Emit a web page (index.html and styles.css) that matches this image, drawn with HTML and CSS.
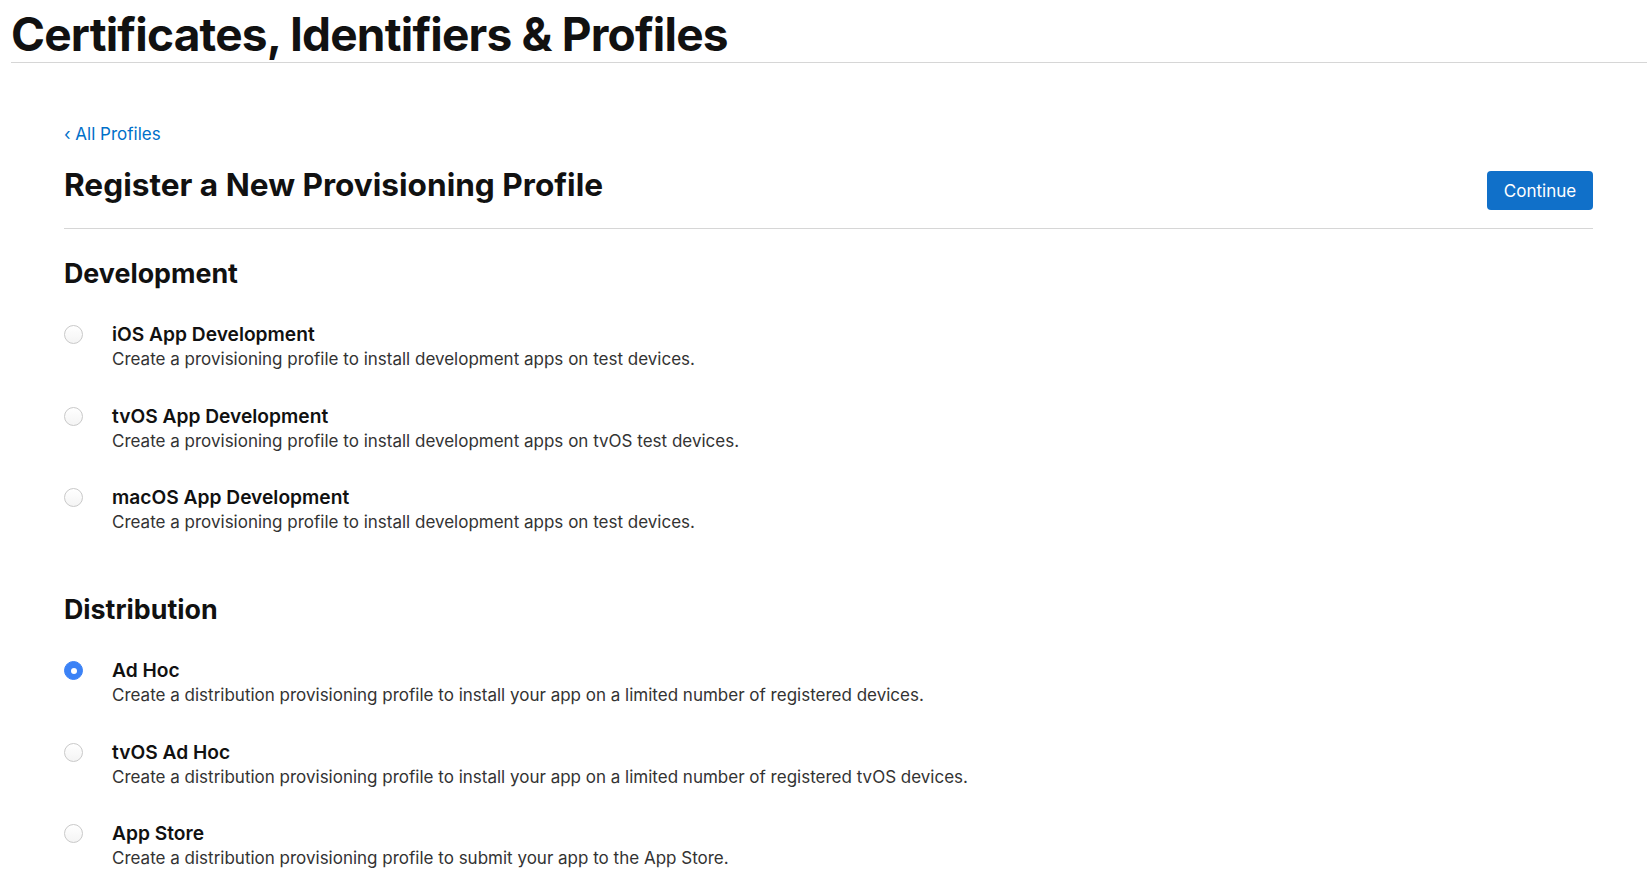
FILE: index.html
```html
<!DOCTYPE html>
<html>
  <head>
    <title>Certificates, Identifiers &amp; Profiles</title>
    <meta name="viewport" content="width=device-width, initial-scale=1.0" />
    <link rel="stylesheet" href="styles.css">
  </head>
  <body>
    <div class="page-header">
      <h1>Certificates, Identifiers &amp; Profiles</h1>
    </div>

    <div class="content">
      <a href="#" class="back-link">&lsaquo; All Profiles</a>

      <div class="title-row">
        <h2>Register a New Provisioning Profile</h2>
        <button class="button">Continue</button>
      </div>

      <!-- Development -->
      <div class="section">
        <h3>Development</h3>
        <div class="option-list">
          <label class="option">
            <span class="radio"></span>
            <span class="option-text">
              <span class="option-title">iOS App Development</span>
              <span class="option-desc">Create a provisioning profile to install development apps on test devices.</span>
            </span>
          </label>
          <label class="option">
            <span class="radio"></span>
            <span class="option-text">
              <span class="option-title">tvOS App Development</span>
              <span class="option-desc">Create a provisioning profile to install development apps on tvOS test devices.</span>
            </span>
          </label>
          <label class="option">
            <span class="radio"></span>
            <span class="option-text">
              <span class="option-title">macOS App Development</span>
              <span class="option-desc">Create a provisioning profile to install development apps on test devices.</span>
            </span>
          </label>
        </div>
      </div>

      <!-- Distribution -->
      <div class="section">
        <h3>Distribution</h3>
        <div class="option-list">
          <label class="option">
            <span class="radio checked"></span>
            <span class="option-text">
              <span class="option-title">Ad Hoc</span>
              <span class="option-desc">Create a distribution provisioning profile to install your app on a limited number of registered devices.</span>
            </span>
          </label>
          <label class="option">
            <span class="radio"></span>
            <span class="option-text">
              <span class="option-title">tvOS Ad Hoc</span>
              <span class="option-desc">Create a distribution provisioning profile to install your app on a limited number of registered tvOS devices.</span>
            </span>
          </label>
          <label class="option">
            <span class="radio"></span>
            <span class="option-text">
              <span class="option-title">App Store</span>
              <span class="option-desc">Create a distribution provisioning profile to submit your app to the App Store.</span>
            </span>
          </label>
        </div>
      </div>
    </div>
  </body>
</html>
```

FILE: styles.css
```css
body {
  margin: 0;
  font-family: Inter, "Noto Sans", Helvetica, Arial, sans-serif;
  color: #111;
  background: #fff;
  overflow: hidden;
}
.page-header {
  margin: 0 3px 0 11px;
  border-bottom: 1px solid #d6d6d6;
}
h1 {
  font-size: 46px;
  font-weight: 700;
  line-height: 56px;
  letter-spacing: -0.8px;
  margin: 0;
  padding-top: 6px;
}
.content {
  padding: 0 57px 0 64px;
}
.back-link {
  display: inline-block;
  margin-top: 59px;
  font-size: 17px;
  line-height: 24px;
  color: #0070c9;
  text-decoration: none;
}
.title-row {
  display: flex;
  justify-content: space-between;
  align-items: flex-start;
  margin-top: 19px;
  padding-bottom: 18px;
  border-bottom: 1px solid #d6d6d6;
}
h2 {
  font-size: 31.6px;
  font-weight: 700;
  line-height: 40px;
  margin: 0;
}
.button {
  margin-top: 6px;
  width: 106px;
  height: 39px;
  background-color: #1070c9;
  color: white;
  border: none;
  border-radius: 4px;
  font-family: inherit;
  font-size: 17px;
  cursor: pointer;
}
.section {
  margin-top: 28px;
}
.section + .section {
  margin-top: 59px;
}
h3 {
  font-size: 26.8px;
  font-weight: 700;
  line-height: 32px;
  margin: 0;
}
.option-list {
  display: flex;
  flex-direction: column;
  gap: 31.5px;
  margin-top: 32px;
}
.option {
  display: flex;
  align-items: flex-start;
  gap: 29px;
  cursor: pointer;
}
.radio {
  flex: none;
  width: 17px;
  height: 17px;
  margin-top: 4px;
  border: 1px solid #c9c9c9;
  border-radius: 50%;
  background: linear-gradient(#fff, #f4f4f4);
}
.radio.checked {
  border-color: #3b82f6;
  background: #3b82f6;
  position: relative;
}
.radio.checked::after {
  content: "";
  position: absolute;
  left: 50%;
  top: 50%;
  width: 6px;
  height: 6px;
  margin: -3px 0 0 -3px;
  border-radius: 50%;
  background: #fff;
}
.option-text {
  display: flex;
  flex-direction: column;
}
.option-title {
  font-size: 19.2px;
  font-weight: 600;
  line-height: 26px;
}
.option-desc {
  font-size: 17px;
  line-height: 24px;
  color: #333;
}
```
